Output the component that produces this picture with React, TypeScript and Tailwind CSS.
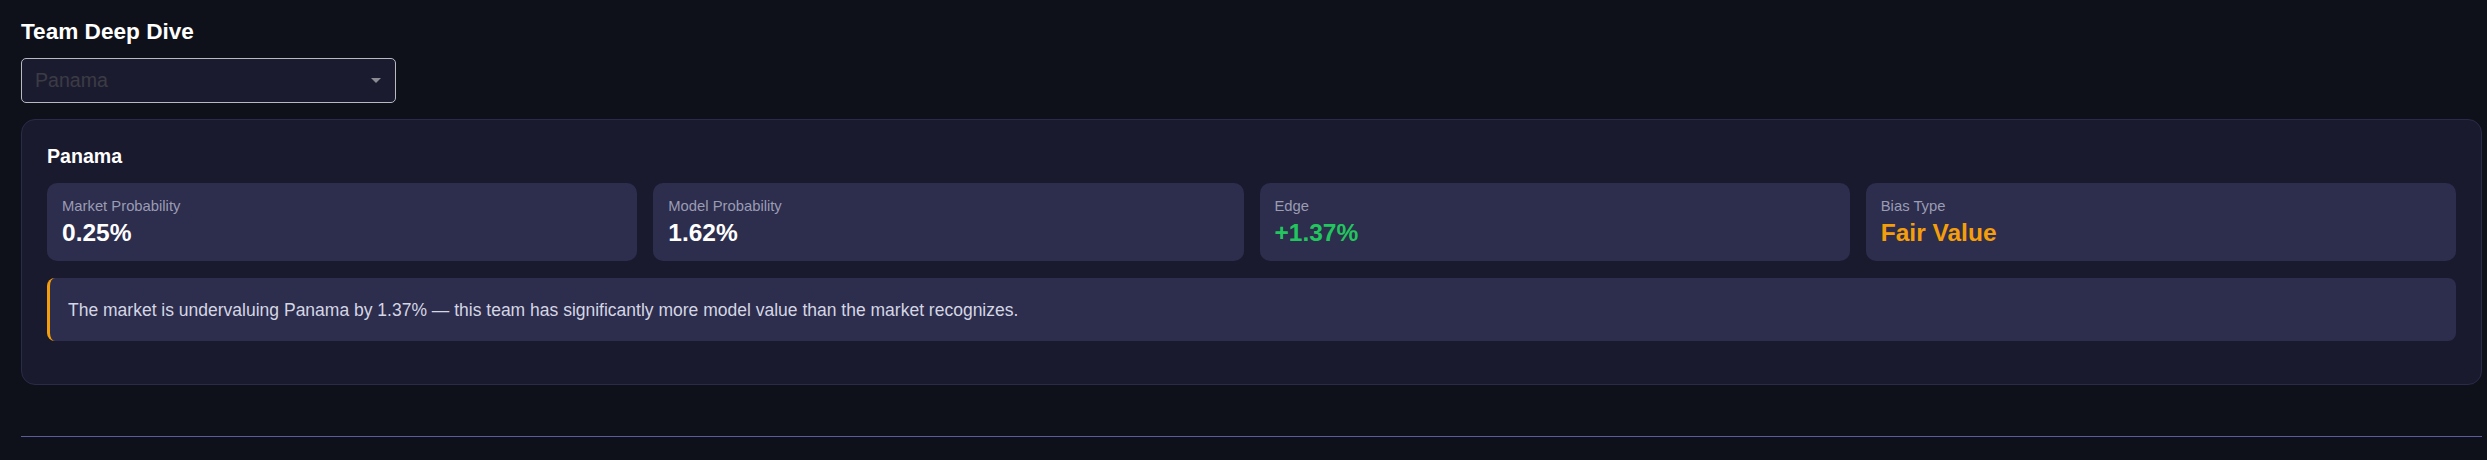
const stats = [
  { label: "Market Probability", value: "0.25%", tone: "text-white" },
  { label: "Model Probability", value: "1.62%", tone: "text-white" },
  { label: "Edge", value: "+1.37%", tone: "text-[#22c55e]" },
  { label: "Bias Type", value: "Fair Value", tone: "text-[#f59e0b]" },
];

function StatBox({ label, value, tone }: { label: string; value: string; tone: string }) {
  return (
    <div className="rounded-[10px] bg-[#2d2d4d] px-[15px] pt-[14.7px] pb-[14px]">
      <div className="text-[14.8px] leading-[19px] text-[#9a9cb4]">{label}</div>
      <div className={`mt-[2px] text-[24.5px] font-bold leading-[29px] ${tone}`}>{value}</div>
    </div>
  );
}

export default function App() {
  const team = "Panama";

  return (
    <div className="min-h-[460px] bg-[#0f111a] pl-[21px] pr-[5px] pt-[18px] font-['Liberation_Sans',Arial,sans-serif]">
      <h2 className="text-[22.6px] font-bold leading-[28px] text-white">Team Deep Dive</h2>

      <div className="mt-[12px] flex h-[45px] w-[375px] items-center justify-between rounded-[5px] border border-[#b9b9c2] bg-[#1b1b30] pl-[13px] pr-[14px]">
        <span className="text-[19.6px] text-[#3b3b44]">{team}</span>
        <svg width="10" height="5" viewBox="0 0 10 5" className="shrink-0">
          <path d="M0 0 L10 0 L5 5 Z" fill="#8b8b94" />
        </svg>
      </div>

      <div className="mt-[15.6px] rounded-[14px] border border-[#2a2a4a] bg-[#1a1a2e] px-[25px] pt-[25px] pb-[43px]">
        <h3 className="text-[19.6px] font-bold leading-[22px] text-white">{team}</h3>

        <div className="mt-[16px] grid grid-cols-4 gap-[16px]">
          {stats.map((s) => (
            <StatBox key={s.label} {...s} />
          ))}
        </div>

        <div className="mt-[17px] flex h-[63px] items-center rounded-[8px] border-l-[3px] border-[#f59e0b] bg-[#2d2d4d] pl-[18px]">
          <p className="text-[17.5px] text-[#d4d6e4]">
            The market is undervaluing {team} by 1.37% — this team has significantly more model value than the market recognizes.
          </p>
        </div>
      </div>

      <div className="mt-[51px] h-px bg-[#5b5b9e]" />
    </div>
  );
}
